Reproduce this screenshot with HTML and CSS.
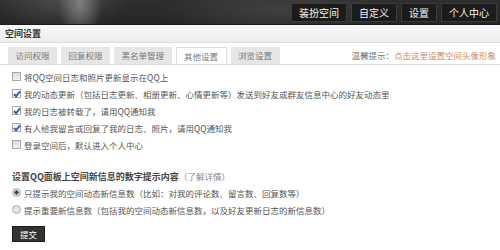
FILE: index.html
```html
<!DOCTYPE html>
<html lang="zh-CN">
<head>
    <meta charset="UTF-8" />
    <title>空间设置</title>
    <link rel="stylesheet" href="styles.css">
</head>
<body>
<div class="topbar">
    <div class="topnav">
        <a class="nav-btn">装扮空间</a>
        <a class="nav-btn">自定义</a>
        <a class="nav-btn">设置</a>
        <a class="nav-btn">个人中心</a>
    </div>
</div>
<div class="panel">
    <div class="panel-title">空间设置</div>
    <div class="tabs">
        <ul class="tab-list">
            <li>访问权限</li>
            <li>回复权限</li>
            <li>黑名单管理</li>
            <li class="active">其他设置</li>
            <li>浏览设置</li>
        </ul>
        <div class="tip">温馨提示：<a>点击这里设置空间头像形象</a></div>
    </div>
    <div class="content">
        <ul class="opts">
            <li><span class="cb"></span>将QQ空间日志和照片更新显示在QQ上</li>
            <li><span class="cb on"></span>我的动态更新（包括日志更新、相册更新、心情更新等）发送到好友或群友信息中心的好友动态里</li>
            <li><span class="cb on"></span>我的日志被转载了，请用QQ通知我</li>
            <li><span class="cb on"></span>有人给我留言或回复了我的日志、照片，请用QQ通知我</li>
            <li><span class="cb"></span>登录空间后，默认进入个人中心</li>
        </ul>
        <h3 class="sub-title">设置QQ面板上空间新信息的数字提示内容<span>（了解详情）</span></h3>
        <ul class="opts">
            <li><span class="rd on"></span>只提示我的空间动态新信息数（比如：对我的评论数、留言数、回复数等）</li>
            <li><span class="rd"></span>提示重要新信息数（包括我的空间动态新信息数，以及好友更新日志的新信息数）</li>
        </ul>
        <button class="submit">提交</button>
    </div>
</div>
</body>
</html>
```

FILE: styles.css
```css
* {
    box-sizing: border-box;
    margin: 0;
    padding: 0;
}
html, body {
    background: #fff;
}
body {
    font-family: "Noto Sans CJK SC", "Liberation Sans", sans-serif;
    font-size: 8.5px;
    color: #555;
}
ul {
    list-style: none;
}

/* top dark bar */
.topbar {
    height: 25px;
    background:
        radial-gradient(ellipse 22px 40px at 80px 2px, rgba(170, 170, 170, .6), rgba(170, 170, 170, 0)),
        radial-gradient(ellipse 70px 30px at 60px 0px, rgba(110, 110, 110, .45), rgba(110, 110, 110, 0)),
        radial-gradient(ellipse 120px 30px at 280px 10px, rgba(90, 90, 90, .45), rgba(90, 90, 90, 0)),
        linear-gradient(#2e2e2e, #262626);
    border-bottom: 1px solid #1a1a1a;
    display: flex;
    justify-content: flex-end;
    padding: 3px 3px 0 0;
}
.topnav {
    display: flex;
    gap: 4px;
}
.nav-btn {
    display: block;
    height: 19px;
    line-height: 17px;
    padding: 0 7px;
    background: #1b1b1b;
    border: 1px solid #3c3c3c;
    color: #f4f4f4;
    font-size: 10px;
}

/* panel */
.panel-title {
    height: 18px;
    line-height: 18px;
    padding-left: 5px;
    background: linear-gradient(#f9f9f9, #ececec);
    border-bottom: 1px solid #dcdcdc;
    color: #333;
    font-weight: bold;
    font-size: 9px;
}
.tabs {
    display: flex;
    justify-content: space-between;
    align-items: flex-end;
    margin-top: 4px;
    padding: 0 4px 0 8px;
    border-bottom: 1px solid #dedede;
}
.tab-list {
    display: flex;
    gap: 4px;
}
.tab-list li {
    height: 17px;
    line-height: 17px;
    padding: 0 7.5px;
    background: #e6e6e6;
    color: #777;
}
.tab-list li.active {
    background: #fff;
    border: 1px solid #e0e0e0;
    border-bottom: none;
    line-height: 16px;
}
.tip {
    line-height: 17px;
    color: #777;
}
.tip a {
    color: #d08a5c;
}

/* content */
.content {
    padding: 3px 12px 0;
}
.opts li {
    display: flex;
    align-items: center;
    height: 17px;
}
.cb {
    width: 9px;
    height: 9px;
    margin-right: 3px;
    border: 1px solid #a8a8a8;
    background: linear-gradient(#dcdcdc, #f2f2f2);
    position: relative;
}
.cb.on {
    background: #fff;
}
.cb.on::after {
    content: "";
    position: absolute;
    left: 2px;
    top: 0;
    width: 2px;
    height: 5px;
    border: solid #3b5fb0;
    border-width: 0 2px 2px 0;
    transform: rotate(40deg);
}
.rd {
    width: 9px;
    height: 9px;
    margin-right: 3px;
    border-radius: 50%;
    border: 1px solid #b0b0b0;
    background: radial-gradient(circle, #eee, #d6d6d6);
}
.rd.on {
    background: radial-gradient(circle, #444 0, #555 40%, #c8c8c8 45%, #eee 100%);
}
.sub-title {
    margin-top: 15px;
    height: 17px;
    line-height: 17px;
    font-size: 9px;
    font-weight: bold;
    color: #444;
}
.sub-title span {
    font-weight: normal;
    color: #888;
    font-size: 8.5px;
}
.opts + .sub-title + .opts li:first-child {
    margin-top: -1px;
}
.submit {
    margin-top: 8px;
    width: 33px;
    height: 16px;
    background: #333;
    border: 1px solid #1e1e1e;
    color: #fff;
    font-family: inherit;
    font-size: 8.5px;
}
```
